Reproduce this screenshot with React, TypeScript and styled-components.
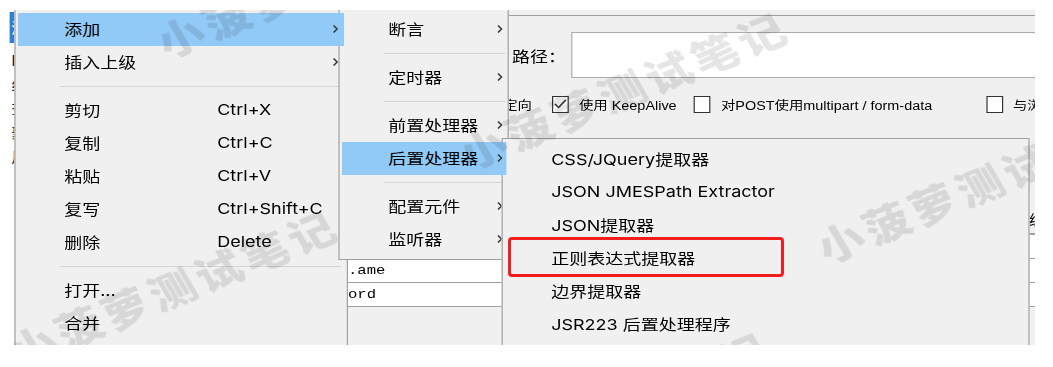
import styled, {createGlobalStyle} from 'styled-components'

// the source screenshot was stretched sideways, so the shot is laid out
// narrow and then scaled back out by this factor
const S = 1.2
const X = (px: number) => `${(px / S).toFixed(2)}px`

const GlobalStyle = createGlobalStyle`
    html, body {
        margin: 0;
        padding: 0;
        background: #fff;
    }
    body {
        width: 1053px;
        height: 367px;
        overflow: hidden;
    }
`

const Chevron = () => (
    <svg width="5" height="10" viewBox="0 0 5 10">
        <path d="M1 1.5 L4 5 L1 8.5" fill="none" stroke="#3a3a3a" strokeWidth="1.3" />
    </svg>
)

const Tick = () => (
    <svg width="12" height="12" viewBox="0 0 12 12">
        <path d="M1.5 6 L4.5 9.5 L10.5 2" fill="none" stroke="#333" strokeWidth="1.4" />
    </svg>
)

type Entry = {text: string; keys?: string; sub?: boolean; active?: boolean} | 'sep'

const editMenu: Entry[] = [
    {text: '添加', sub: true, active: true},
    {text: '插入上级', sub: true},
    'sep',
    {text: '剪切', keys: 'Ctrl+X'},
    {text: '复制', keys: 'Ctrl+C'},
    {text: '粘贴', keys: 'Ctrl+V'},
    {text: '复写', keys: 'Ctrl+Shift+C'},
    {text: '删除', keys: 'Delete'},
    'sep',
    {text: '打开...'},
    {text: '合并'},
    {text: '保存为'},
]

const addMenu: Entry[] = [
    {text: '断言', sub: true},
    'sep',
    {text: '定时器', sub: true},
    'sep',
    {text: '前置处理器', sub: true},
    {text: '后置处理器', sub: true, active: true},
    'sep',
    {text: '配置元件', sub: true},
    {text: '监听器', sub: true},
]

const postMenu: Entry[] = [
    {text: 'CSS/JQuery提取器'},
    {text: 'JSON JMESPath Extractor'},
    {text: 'JSON提取器'},
    {text: '正则表达式提取器'},
    {text: '边界提取器'},
    {text: 'JSR223 后置处理程序'},
    {text: 'XPath提取器'},
]

const treeRows = ['HTTP请求', '线程组', '查看结果树', '聚合报告', '用户定义的变量']

const watermarks = [
    {x: 150, y: 25},
    {x: 27, y: 334},
    {x: 402, y: 136},
    {x: 700, y: 230},
    {x: 387, y: 456},
]

const MenuList = ({items, keyCol}: {items: Entry[]; keyCol?: boolean}) => (
    <>
        {items.map((entry, i) =>
            entry === 'sep' ? (
                <Sep key={i} />
            ) : (
                <Item key={i} $active={entry.active}>
                    <Label $keyCol={keyCol}>{entry.text}</Label>
                    {entry.keys && <span>{entry.keys}</span>}
                    {entry.sub && (
                        <Arrow>
                            <Chevron />
                        </Arrow>
                    )}
                </Item>
            )
        )}
    </>
)

export default function App() {
    return (
        <Page>
            <GlobalStyle />
            <Shot>
                <Canvas>
                    <TreePane>
                        <TreeRow $selected>测试计划</TreeRow>
                        {treeRows.map(row => (
                            <TreeRow key={row}>{row}</TreeRow>
                        ))}
                    </TreePane>
                    <Content>
                        <TopStrip />
                        <PathRow>
                            <FieldLabel>路径：</FieldLabel>
                            <TextField />
                        </PathRow>
                        <CheckRow>
                            <LeadIn>
                                自动重定向 <Box /> 跟随重定向
                            </LeadIn>
                            <CheckOpt $w={142}>
                                <Box>
                                    <Tick />
                                </Box>
                                使用 KeepAlive
                            </CheckOpt>
                            <CheckOpt $w={292}>
                                <Box />
                                对POST使用multipart / form-data
                            </CheckOpt>
                            <CheckOpt>
                                <Box />
                                与浏览器兼容的头
                            </CheckOpt>
                        </CheckRow>
                        <Table>
                            <HeadRow>
                                <HeadCell>编码?</HeadCell>
                            </HeadRow>
                            <Row />
                            <Row>.ame</Row>
                            <Row>ord</Row>
                        </Table>
                    </Content>

                    <Menu $left={14} $top={-2} $width={334} $padR={4}>
                        <MenuList items={editMenu} keyCol />
                    </Menu>
                    <Menu $left={338} $top={-2} $width={171} $padR={1}>
                        <MenuList items={addMenu} />
                    </Menu>
                    <Menu $left={501} $top={128} $width={528} $padR={3}>
                        <MenuList items={postMenu} />
                    </Menu>

                    <WatermarkLayer>
                        {watermarks.map((w, i) => (
                            <Watermark key={i} $x={w.x} $y={w.y}>
                                小菠萝测试笔记
                            </Watermark>
                        ))}
                    </WatermarkLayer>
                </Canvas>
                <RedBox />
            </Shot>
        </Page>
    )
}

const Page = styled.div`
    padding-top: 10px;
`

const Shot = styled.div`
    position: relative;
    width: 1035px;
    height: 335px;
    overflow: hidden;
`

const Canvas = styled.div`
    position: relative;
    display: flex;
    width: ${X(1035)};
    height: 335px;
    background: #f0f0f0;
    transform: scaleX(${S});
    transform-origin: 0 0;
    font-family: Inter, 'Noto Sans CJK SC', sans-serif;
    color: #000;
`

const TreePane = styled.div`
    flex: none;
    width: ${X(14)};
    padding-top: 2px;
    background: #fff;
    overflow: hidden;
    font-size: 14px;
`

const TreeRow = styled.div<{$selected?: boolean}>`
    height: ${({$selected}) => ($selected ? '31px' : '24px')};
    margin: ${({$selected}) => ($selected ? '0 0 6px' : '0')} ${X(10)};
    padding-left: 1px;
    line-height: ${({$selected}) => ($selected ? '31px' : '24px')};
    white-space: nowrap;
    background: ${({$selected}) => ($selected ? '#2f7fd6' : 'transparent')};
    color: ${({$selected}) => ($selected ? '#fff' : '#222')};
`

const Content = styled.div`
    flex: 1;
    min-width: 0;
    display: flex;
    flex-direction: column;
`

const TopStrip = styled.div`
    height: 5px;
    border-bottom: 1px solid #a0a0a0;
`

const PathRow = styled.div`
    display: flex;
    align-items: center;
    height: 46px;
    margin-top: 16px;
    padding-left: ${X(498)};
`

const FieldLabel = styled.span`
    flex: none;
    width: ${X(59)};
    font-size: 15px;
`

const TextField = styled.div`
    flex: 1;
    align-self: stretch;
    margin-right: -20px;
    background: #fff;
    border: 1px solid #ababab;
`

const CheckRow = styled.div`
    display: flex;
    align-items: center;
    height: 18px;
    margin-top: 17px;
    font-family: 'Liberation Sans', 'Noto Sans CJK SC', sans-serif;
    font-size: 12px;
    white-space: nowrap;
`

const LeadIn = styled.div`
    flex: none;
    width: ${X(518)};
    margin-right: ${X(20)};
    display: flex;
    justify-content: flex-end;
    align-items: center;
    gap: ${X(9)};
    overflow: hidden;
`

const CheckOpt = styled.div<{$w?: number}>`
    flex: none;
    width: ${({$w}) => ($w ? X($w) : 'auto')};
    display: flex;
    align-items: center;
    gap: ${X(10)};
`

const Box = styled.span`
    flex: none;
    width: ${X(17)};
    height: 17px;
    box-sizing: border-box;
    display: inline-flex;
    align-items: center;
    justify-content: center;
    border: 1px solid #333;
    background: #fff;
`

const Table = styled.div`
    margin: 92px 0 0 ${X(333)};
    font-family: 'Liberation Mono', monospace;
    font-size: 13px;
`

const HeadRow = styled.div`
    height: 28px;
    display: flex;
    align-items: center;
    border-bottom: 2px solid #a0a0a0;
    font-family: Inter, 'Noto Sans CJK SC', sans-serif;
    font-size: 14px;
    white-space: nowrap;
`

const HeadCell = styled.span`
    flex: none;
    margin-left: ${X(682)};
`

const Row = styled.div`
    height: 23px;
    line-height: 23px;
    padding-left: ${X(1)};
    background: #fff;
    border-bottom: 1px solid #a0a0a0;
    white-space: nowrap;
`

const Menu = styled.div<{$left: number; $top: number; $width: number; $padR: number}>`
    position: absolute;
    left: ${({$left}) => X($left)};
    top: ${({$top}) => $top}px;
    width: ${({$width}) => X($width)};
    box-sizing: border-box;
    padding: 4px ${({$padR}) => X($padR)} 3px ${X(3)};
    background: #f0f0f0;
    border: 1px solid #a0a0a0;
    font-size: 15px;
`

const Item = styled.div<{$active?: boolean}>`
    position: relative;
    z-index: ${({$active}) => ($active ? 2 : 'auto')};
    display: flex;
    align-items: center;
    box-sizing: border-box;
    height: 33px;
    padding: 0 0 2px ${X(46)};
    white-space: nowrap;
    background: ${({$active}) => ($active ? '#91c9f7' : 'transparent')};
`

const Label = styled.span<{$keyCol?: boolean}>`
    flex: none;
    width: ${({$keyCol}) => ($keyCol ? X(153) : 'auto')};
`

const Arrow = styled.span`
    display: flex;
    margin-left: auto;
    margin-right: ${X(4)};
`

const Sep = styled.div`
    margin: 7px ${X(2)} 7px ${X(42)};
    border-top: 1px solid #d5d5d5;
`

const WatermarkLayer = styled.div`
    position: absolute;
    inset: 0;
    z-index: 3;
    overflow: hidden;
    pointer-events: none;
`

const Watermark = styled.span<{$x: number; $y: number}>`
    position: absolute;
    left: ${({$x}) => $x - 20}px;
    top: ${({$y}) => $y - 22}px;
    line-height: 44px;
    font-family: 'Noto Sans CJK SC', sans-serif;
    font-size: 39px;
    font-weight: 900;
    letter-spacing: 4px;
    white-space: nowrap;
    color: rgba(0, 0, 0, 0.1);
    transform: rotate(-26deg);
    transform-origin: 20px 22px;
`

const RedBox = styled.div`
    position: absolute;
    left: 508px;
    top: 227px;
    width: 276px;
    height: 40px;
    box-sizing: border-box;
    border: 3px solid #f21d1d;
    border-radius: 4px;
`
